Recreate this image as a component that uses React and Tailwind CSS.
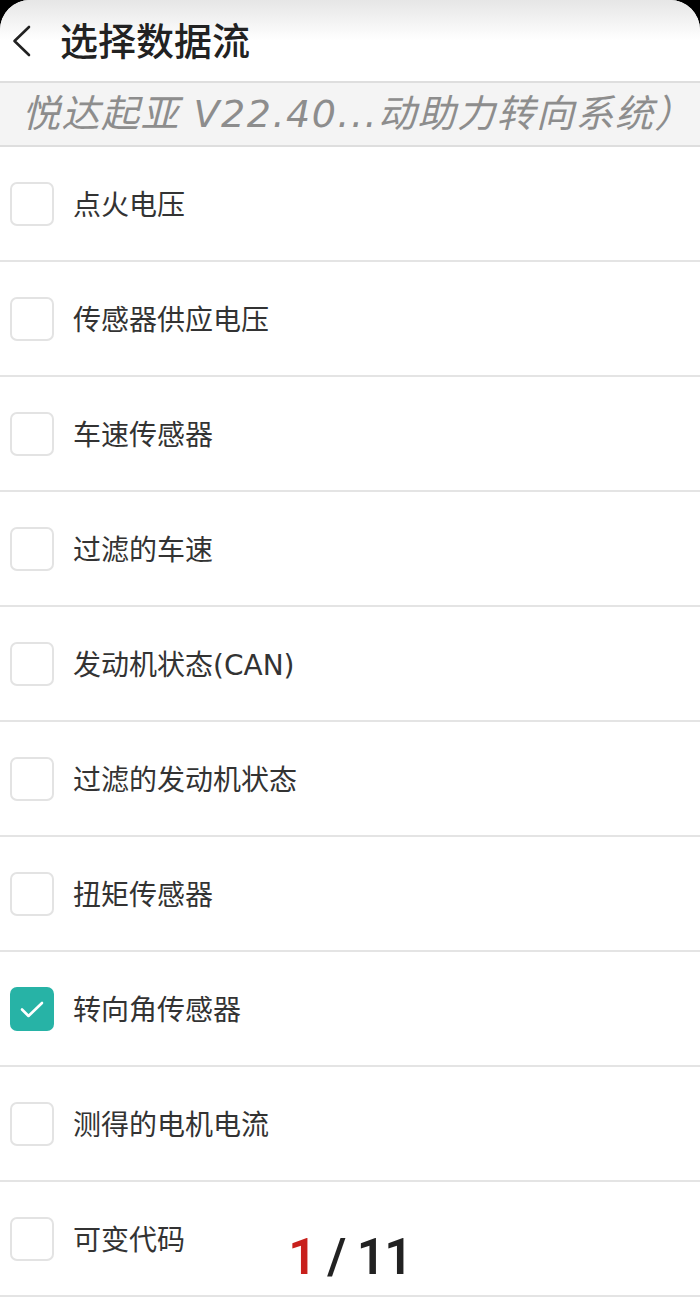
import React, { useState } from "react"

const items = [
  "点火电压",
  "传感器供应电压",
  "车速传感器",
  "过滤的车速",
  "发动机状态(CAN)",
  "过滤的发动机状态",
  "扭矩传感器",
  "转向角传感器",
  "测得的电机电流",
  "可变代码",
]

const font = { fontFamily: '"Noto Sans CJK SC", "Noto Sans", sans-serif' }
const wide = { fontFamily: '"DejaVu Sans", "Noto Sans CJK SC", sans-serif' }

function Checkbox({ checked }) {
  if (checked) {
    return (
      <div className="w-[44px] h-[44px] rounded-[7px] bg-[#27b3a6] flex items-center justify-center shrink-0">
        <svg width="28" height="28" viewBox="0 0 28 28" fill="none">
          <path d="M4 14.5l6.5 6.5L24 8" stroke="white" strokeWidth="2.6" strokeLinecap="round" strokeLinejoin="round" />
        </svg>
      </div>
    )
  }
  return <div className="w-[44px] h-[44px] rounded-[7px] border-2 border-[#e3e3e3] bg-white shrink-0" />
}

export default function App() {
  const [checked, setChecked] = useState([7])

  const toggle = (i) => setChecked(c => c.includes(i) ? c.filter(x => x !== i) : [...c, i])

  return (
    <div className="bg-black w-[700px] h-[1298px] overflow-hidden" style={font}>
      <div className="relative bg-white rounded-t-[30px] h-full overflow-hidden">
        {/* Header */}
        <div className="h-[81px] flex items-center bg-gradient-to-b from-[#e6e6e6] via-white to-white">
          <svg width="40" height="40" viewBox="0 0 40 40" className="ml-[6px]">
            <path d="M23 6L8.5 20 23 34" stroke="#222" strokeWidth="2.6" fill="none" strokeLinecap="round" strokeLinejoin="round" />
          </svg>
          <h1 className="ml-[14px] text-[38px] text-[#222] leading-none font-medium pb-[3px]">选择数据流</h1>
        </div>

        {/* Subtitle */}
        <div className="h-[66px] bg-[#f4f4f4] border-y-2 border-[#dedede] flex items-center pl-[22px] overflow-hidden whitespace-nowrap">
          <span className="italic text-[38px] text-[#8d8d8d] leading-none tracking-[1.5px]" style={wide}>悦达起亚 V22.40...动助力转向系统）</span>
        </div>

        {/* List */}
        <div>
          {items.map((name, i) => (
            <div
              key={name}
              onClick={() => toggle(i)}
              className="h-[115px] flex items-center border-b-2 border-[#e4e4e4] pl-[10px]"
            >
              <Checkbox checked={checked.includes(i)} />
              <span className="ml-[19px] pt-[5px] text-[28px] text-[#333] leading-none" style={wide}>{name}</span>
            </div>
          ))}
        </div>

        {/* Page counter */}
        <div className="absolute left-0 right-0 top-[1232px] flex justify-center">
          <span
            className="text-[50px] font-semibold leading-none text-[#222] tracking-[-1px]"
            style={{ fontFamily: 'Roboto, "Noto Sans", sans-serif' }}
          >
            <span className="text-[#c8201c]">1</span> / 11
          </span>
        </div>
      </div>
    </div>
  )
}
